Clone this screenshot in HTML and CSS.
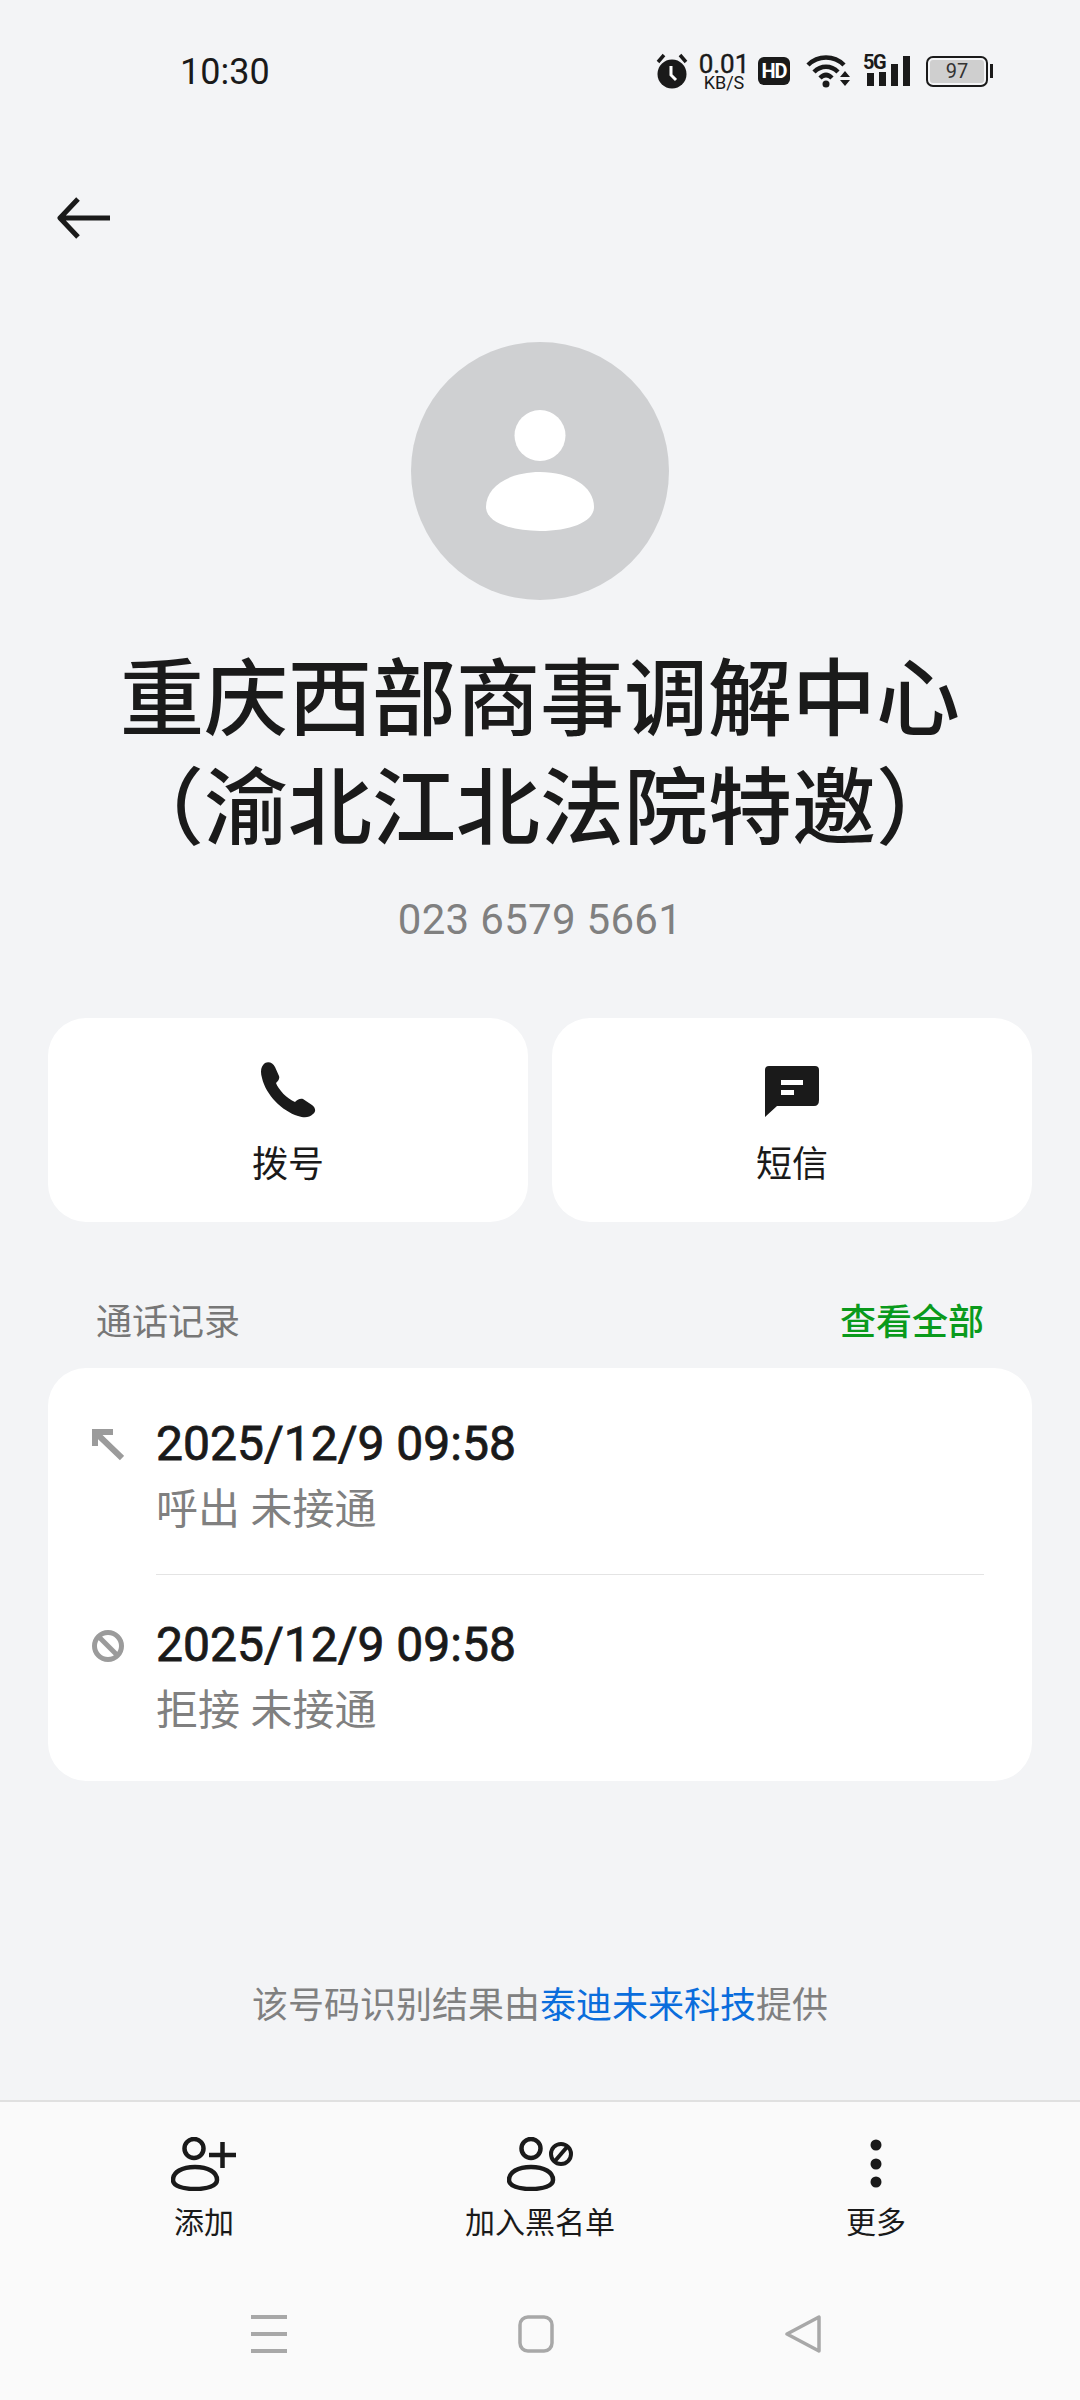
FILE: index.html
```html
<!DOCTYPE html>
<html lang="zh-CN">
<head>
    <meta charset="UTF-8">
    <meta name="viewport" content="width=device-width, initial-scale=1.0">
    <title>重庆西部商事调解中心</title>
    <link rel="stylesheet" href="styles.css">
</head>
<body>

<div class="status-bar">
    <span class="clock">10:30</span>
    <div class="status-icons">
        <svg class="ic-alarm" width="32" height="36" viewBox="0 0 32 36">
            <circle cx="16" cy="21" r="14.5" fill="#1a1a1a"/>
            <path d="M2 9 L8 2 M30 9 L24 2" stroke="#1a1a1a" stroke-width="3.5" fill="none"/>
            <path d="M15 13 V22 L20 27" stroke="#fff" stroke-width="3" fill="none"/>
        </svg>
        <div class="speed">
            <span class="speed-num">0.01</span>
            <span class="speed-unit">KB/S</span>
        </div>
        <span class="hd">HD</span>
        <svg class="ic-wifi" width="44" height="34" viewBox="0 0 44 34">
            <path d="M2 11 C12 1 28 1 38 11" stroke="#1a1a1a" stroke-width="4.5" fill="none"/>
            <path d="M8 18 C15 11 25 11 32 18" stroke="#1a1a1a" stroke-width="4.5" fill="none"/>
            <path d="M14 24 C18 20 22 20 26 24" stroke="#1a1a1a" stroke-width="4.5" fill="none"/>
            <circle cx="20" cy="30" r="3.5" fill="#1a1a1a"/>
            <path d="M39 17 L44 23 H34 Z M34 26 H44 L39 32 Z" fill="#1a1a1a"/>
        </svg>
        <div class="signal">
            <span class="five-g">5G</span>
            <svg width="47" height="34" viewBox="0 0 47 34">
                <rect x="4" y="19" width="7" height="13" fill="#1a1a1a"/>
                <rect x="16" y="18" width="7" height="14" fill="#1a1a1a"/>
                <rect x="28" y="10" width="7" height="22" fill="#1a1a1a"/>
                <rect x="40" y="2" width="7" height="30" fill="#1a1a1a"/>
            </svg>
        </div>
        <div class="battery"><span class="battery-fill">97</span></div>
    </div>
</div>

<div class="toolbar">
    <svg width="54" height="42" viewBox="0 0 54 42">
        <path d="M53 21 H3 M21 2 L3 21 L21 40" stroke="#1a1a1a" stroke-width="5" fill="none" stroke-linejoin="round"/>
    </svg>
</div>

<div class="contact">
    <div class="avatar">
        <svg width="108" height="122" viewBox="0 0 108 122">
            <circle cx="54" cy="25.500" r="25.500" fill="#fff"/>
            <path d="M0 97 C0 76 24 62 54 62 C84 62 108 76 108 97 C108 112 84 121 54 121 C24 121 0 112 0 97 Z" fill="#fff"/>
        </svg>
    </div>
    <h1 class="name">重庆西部商事调解中心<br>（渝北江北法院特邀）</h1>
    <p class="phone">023 6579 5661</p>
</div>

<div class="actions">
    <div class="action-card">
        <svg width="56" height="56" viewBox="0 0 56 56">
            <path d="M5 1 C9 -1 13 1 15 5 L19 14 C20 17 18 19 16 21 C18 27 27 37 35 40 C37 38 40 36 43 37 L52 43 C56 46 56 50 53 52 C49 56 44 56 38 54 C22 49 6 33 2 16 C0 9 1 4 5 1 Z" fill="#1a1a1a"/>
        </svg>
        <span>拨号</span>
    </div>
    <div class="action-card">
        <svg width="56" height="56" viewBox="0 0 56 56">
            <path d="M5 4 H51 Q55 4 55 8 V38 Q55 44 50 44 H13 L1 55 V8 Q1 4 5 4 Z" fill="#1a1a1a"/>
            <rect x="17" y="18" width="22" height="5" fill="#fff"/>
            <rect x="17" y="28" width="13" height="5" fill="#fff"/>
        </svg>
        <span>短信</span>
    </div>
</div>

<div class="history-head">
    <span class="history-title">通话记录</span>
    <span class="history-all">查看全部</span>
</div>

<div class="history-card">
    <div class="call-row first">
        <svg class="call-icon" width="32" height="32" viewBox="0 0 32 32">
            <path d="M3 17 V3 H21 M3 3 L30 29" stroke="#9b9b9b" stroke-width="6" fill="none"/>
        </svg>
        <div class="call-text">
            <div class="call-date">2025/12/9 09:58</div>
            <div class="call-desc">呼出 未接通</div>
        </div>
    </div>
    <div class="call-row second">
        <svg class="call-icon" width="32" height="32" viewBox="0 0 32 32">
            <circle cx="16" cy="16" r="13.500" stroke="#9b9b9b" stroke-width="5" fill="none"/>
            <path d="M6 6 L26 26" stroke="#9b9b9b" stroke-width="5"/>
        </svg>
        <div class="call-text">
            <div class="call-date">2025/12/9 09:58</div>
            <div class="call-desc">拒接 未接通</div>
        </div>
    </div>
</div>

<p class="source">该号码识别结果由<span class="source-link">泰迪未来科技</span>提供</p>

<div class="bottom">
    <div class="bottom-actions">
        <div class="bottom-item">
            <svg width="66" height="54" viewBox="0 0 66 54">
                <ellipse cx="23" cy="11.500" rx="9.500" ry="9.500" stroke="#1a1a1a" stroke-width="4.500" fill="none"/>
                <path d="M2 43 C2 35 11 30 24 30 C37 30 46 35 46 43 C46 49 36 52 24 52 C12 52 2 49 2 43 Z" stroke="#1a1a1a" stroke-width="4.500" fill="none"/>
                <path d="M38 18 H65 M51.500 5 V31" stroke="#1a1a1a" stroke-width="4.500" fill="none"/>
            </svg>
            <span>添加</span>
        </div>
        <div class="bottom-item">
            <svg width="66" height="54" viewBox="0 0 66 54">
                <ellipse cx="24" cy="11.500" rx="9.500" ry="9.500" stroke="#1a1a1a" stroke-width="4.500" fill="none"/>
                <path d="M2 43 C2 35 11 30 24 30 C37 30 46 35 46 43 C46 49 36 52 24 52 C12 52 2 49 2 43 Z" stroke="#1a1a1a" stroke-width="4.500" fill="none"/>
                <circle cx="54" cy="17" r="10" stroke="#1a1a1a" stroke-width="4" fill="none"/>
                <path d="M48 24 L60 10" stroke="#1a1a1a" stroke-width="4"/>
            </svg>
            <span>加入黑名单</span>
        </div>
        <div class="bottom-item">
            <svg width="66" height="54" viewBox="0 0 66 54">
                <circle cx="33" cy="8" r="5.500" fill="#1a1a1a"/>
                <circle cx="33" cy="27" r="5.500" fill="#1a1a1a"/>
                <circle cx="33" cy="45" r="5.500" fill="#1a1a1a"/>
            </svg>
            <span>更多</span>
        </div>
    </div>
    <div class="nav-bar">
        <svg width="36" height="38" viewBox="0 0 36 38">
            <path d="M0 2 H36 M0 19 H36 M0 36 H36" stroke="#a8a8a8" stroke-width="4"/>
        </svg>
        <svg width="36" height="38" viewBox="0 0 36 38">
            <rect x="2" y="2" width="32" height="34" rx="8" stroke="#a8a8a8" stroke-width="3.500" fill="none"/>
        </svg>
        <svg width="36" height="38" viewBox="0 0 36 38">
            <path d="M34 2 V36 L2 19 Z" stroke="#a8a8a8" stroke-width="3.500" stroke-linejoin="round" fill="none"/>
        </svg>
    </div>
</div>

</body>
</html>
```

FILE: styles.css
```css
body {
    font-family: Roboto, "Noto Sans CJK SC", sans-serif;
    background-color: #f3f4f6;
    color: #1a1a1a;
    margin: 0;
    width: 1080px;
    height: 2400px;
    display: flex;
    flex-direction: column;
    overflow: hidden;
}
.status-bar {
    height: 142px;
    display: flex;
    justify-content: space-between;
    align-items: center;
    padding: 0 88px 0 180px;
    flex-shrink: 0;
}
.clock {
    font-size: 36px;
    padding-top: 2px;
}
.status-icons {
    display: flex;
    align-items: center;
}
.speed {
    display: flex;
    flex-direction: column;
    align-items: center;
    margin-left: 12px;
    width: 48px;
    line-height: 1;
}
.speed-num {
    font-size: 26px;
    line-height: 22px;
    -webkit-text-stroke: 0.4px #1a1a1a;
}
.speed-unit {
    font-size: 18px;
    line-height: 15px;
}
.hd {
    margin-left: 10px;
    width: 32px;
    height: 28px;
    border-radius: 6px;
    background: #1a1a1a;
    color: #fff;
    font-size: 20px;
    font-weight: 700;
    line-height: 28px;
    text-align: center;
    letter-spacing: -1px;
}
.ic-wifi {
    margin-left: 16px;
}
.signal {
    position: relative;
    margin-left: 13px;
    width: 47px;
    height: 34px;
}
.five-g {
    position: absolute;
    left: 0;
    top: -1px;
    font-size: 20px;
    font-weight: 700;
    line-height: 18px;
    letter-spacing: -1.5px;
}
.signal svg {
    display: block;
}
.battery {
    position: relative;
    margin-left: 16px;
    margin-right: 4px;
    width: 62px;
    height: 31px;
    box-sizing: border-box;
    border: 2.5px solid #1a1a1a;
    border-radius: 7px;
    padding: 2px;
    display: flex;
}
.battery::after {
    content: "";
    position: absolute;
    right: -7px;
    top: 6px;
    width: 3px;
    height: 14px;
    background: #1a1a1a;
}
.battery-fill {
    flex: 1;
    background: #cfcfcf;
    border-radius: 3px;
    color: #333;
    font-size: 20px;
    line-height: 22px;
    text-align: center;
}
.toolbar {
    height: 152px;
    display: flex;
    align-items: center;
    padding-left: 57px;
    flex-shrink: 0;
}
.contact {
    display: flex;
    flex-direction: column;
    align-items: center;
    padding-top: 48px;
    flex-shrink: 0;
}
.avatar {
    width: 258px;
    height: 258px;
    border-radius: 50%;
    background: #cfd0d2;
    display: flex;
    justify-content: center;
    align-items: center;
}
.name {
    margin: 46px 0 0;
    font-size: 84px;
    font-weight: 500;
    line-height: 109px;
    text-align: center;
}
.phone {
    margin: 28px 0 0;
    font-size: 42px;
    line-height: 56px;
    color: #808080;
    letter-spacing: 0.3px;
}
.actions {
    display: flex;
    gap: 24px;
    margin: 70px 48px 0;
    flex-shrink: 0;
}
.action-card {
    flex: 1;
    height: 204px;
    background: #fff;
    border-radius: 38px;
    display: flex;
    flex-direction: column;
    align-items: center;
    padding-top: 44px;
    box-sizing: border-box;
    font-size: 36px;
}
.action-card span {
    margin-top: 23px;
    line-height: 48px;
}
.history-head {
    display: flex;
    justify-content: space-between;
    align-items: center;
    height: 50px;
    margin: 72px 96px 0;
    font-size: 36px;
    flex-shrink: 0;
}
.history-title {
    color: #777;
}
.history-all {
    color: #0a9a1c;
    font-weight: 500;
}
.history-card {
    margin: 24px 48px 0;
    padding: 43px 48px 37px 44px;
    background: #fff;
    border-radius: 38px;
    flex-shrink: 0;
}
.call-row {
    display: flex;
    gap: 32px;
}
.call-row.first {
    padding-bottom: 32px;
}
.call-row.second {
    padding-top: 37px;
}
.call-row.first .call-text {
    padding-bottom: 31px;
    border-bottom: 1px solid #e4e4e4;
    margin-bottom: -32px;
}
.call-icon {
    margin-top: 18px;
    flex-shrink: 0;
}
.call-text {
    flex: 1;
}
.call-date {
    font-size: 48px;
    line-height: 66px;
    -webkit-text-stroke: 0.8px #1a1a1a;
}
.call-desc {
    font-size: 42px;
    line-height: 66px;
    color: #808080;
}
.source {
    margin: 201px 0 0;
    font-size: 36px;
    line-height: 48px;
    color: #808080;
    text-align: center;
    flex-shrink: 0;
}
.source-link {
    color: #0a6ddc;
}
.bottom {
    margin-top: auto;
    height: 300px;
    box-sizing: border-box;
    background: #fafafa;
    border-top: 2px solid #e0e0e0;
    flex-shrink: 0;
}
.bottom-actions {
    display: grid;
    grid-template-columns: repeat(3, 336px);
    justify-content: center;
    padding-top: 35px;
}
.bottom-item {
    display: flex;
    flex-direction: column;
    align-items: center;
    font-size: 30px;
}
.bottom-item span {
    margin-top: 12px;
    line-height: 40px;
}
.nav-bar {
    display: grid;
    grid-template-columns: repeat(3, 267px);
    justify-content: center;
    justify-items: center;
    margin-top: 72px;
    padding-right: 8px;
}
```
